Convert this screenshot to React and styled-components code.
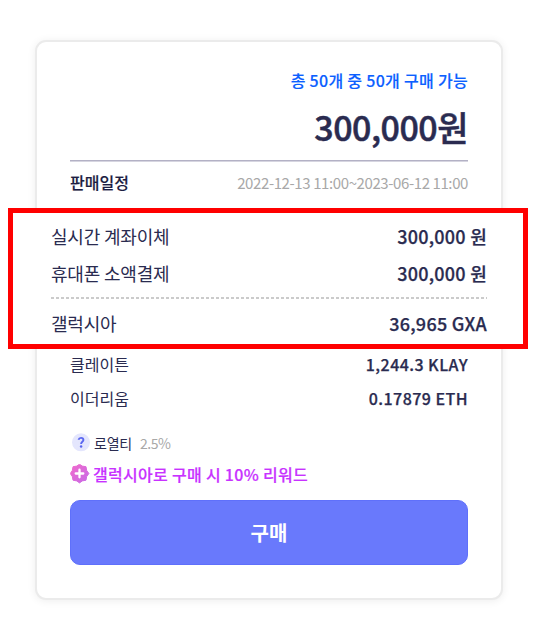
import React from "react";
import styled, { createGlobalStyle } from "styled-components";

const GlobalStyle = createGlobalStyle`
  * { box-sizing: border-box; }
  body {
    margin: 0;
    background: #fff;
    color: #2a2b50;
    font-family: "Noto Sans CJK KR", "Noto Sans", sans-serif;
  }
`;

const Page = styled.main`
  display: flex;
  height: 639px;
  padding: 40px 34px 39px 35px;
  overflow: hidden;
`;

const Card = styled.section`
  display: flex;
  flex-direction: column;
  width: 468px;
  height: 560px;
  padding: 24px 33px 0;
  border: 2px solid #ebebeb;
  border-radius: 11px;
  background: #fff;
  box-shadow: 0 1px 9px rgba(0, 0, 0, 0.07);
`;

const Stock = styled.div`
  height: 28px;
  line-height: 28px;
  font-size: 16px;
  font-weight: 500;
  letter-spacing: 0.3px;
  text-align: right;
  white-space: pre;
  color: #0c5fff;
  -webkit-text-stroke: 0.15px currentColor;
`;

const Price = styled.div`
  height: 67px;
  padding-top: 8px;
  line-height: 50px;
  font-size: 34px;
  font-weight: 500;
  letter-spacing: -0.5px;
  text-align: right;
  -webkit-text-stroke: 0.5px currentColor;
`;

const Rule = styled.div`
  flex: none;
  height: 2px;
  margin-top: -1px;
  border-top: 1px solid #b3b1c5;
  background: #d6d5e0;
`;

const Row = styled.div`
  display: flex;
  flex: none;
  justify-content: space-between;
  height: ${(p) => p.$height}px;
  line-height: ${(p) => p.$height}px;
  font-size: ${(p) => p.$size || 16}px;
  letter-spacing: ${(p) => p.$tracking || 0}px;
  white-space: pre;
`;

const Heading = styled.span`
  font-weight: 500;
  color: #1c1d42;
  -webkit-text-stroke: 0.15px currentColor;
`;

const Period = styled.span`
  font-size: 15px;
  letter-spacing: -0.4px;
  color: #a8a8a8;
`;

const Amount = styled.span`
  font-weight: 500;
  letter-spacing: ${(p) => p.$tracking || 0.25}px;
  -webkit-text-stroke: 0.25px currentColor;
`;

const Highlight = styled.div`
  flex: none;
  height: 141px;
  margin: 5px -62px 0 -62px;
  width: 520px;
  padding: 5px 36px 0 38px;
  border: 5px solid #ff0000;
  background: #fff;
`;

const Divider = styled.div`
  height: 2px;
  margin: 5px 0 6px;
  background: repeating-linear-gradient(90deg, #cbcbcb 0 3px, transparent 3px 5px);
`;

const Royalty = styled.div`
  display: flex;
  align-items: center;
  height: 28px;
  margin-top: 13px;
  font-size: 14px;
  line-height: 28px;
  letter-spacing: -0.2px;
`;

const Badge = styled.svg`
  flex: none;
  width: 20px;
  height: 20px;
  margin: 0 3px 0 ${(p) => p.$inset || 0}px;
`;

const Rate = styled.span`
  margin-left: 8px;
  letter-spacing: -0.5px;
  color: #a8a8a8;
`;

const Reward = styled.div`
  display: flex;
  align-items: center;
  height: 32px;
  margin-top: 1px;
  font-size: 16px;
  line-height: 32px;
  font-weight: 500;
  letter-spacing: 0.3px;
  white-space: pre;
  color: #c832ff;
  -webkit-text-stroke: 0.2px currentColor;
`;

const BuyButton = styled.button`
  flex: none;
  width: 398px;
  height: 65px;
  margin: 10px 0 0;
  padding: 0;
  border: 1px solid #5f70fb;
  border-radius: 10px;
  background: #6979fc;
  color: #fff;
  font: 700 20px/63px "Noto Sans CJK KR", sans-serif;
`;

function QuestionIcon() {
  return (
    <Badge $inset={1} viewBox="0 0 20 20" fill="none">
      <circle cx="10" cy="9.3" r="9" fill="#e4e6fd" />
      <path d="M7.500 6.800C7.900 5.500 8.800 4.900 10 4.900c1.400 0 2.400.8 2.400 2.100 0 1.800-2.300 1.900-2.300 4" stroke="#5a66f0" strokeWidth="1.900" />
      <circle cx="10.100" cy="13.500" r="1.250" fill="#5a66f0" />
    </Badge>
  );
}

function RewardIcon() {
  return (
    <Badge viewBox="0 0 20 20">
      <defs>
        <linearGradient id="reward" x1="0" y1="0" x2="1" y2="1">
          <stop offset="0" stopColor="#f26acb" />
          <stop offset="1" stopColor="#c66ae8" />
        </linearGradient>
      </defs>
      <path
        d="M9.500.200L12.300 2.100L16 2.700L16.700 6.500L18.900 9.500L16.700 12.500L16 16.200L12.300 16.900L9.500 18.900L6.700 16.900L3 16.200L2.300 12.500L.300 9.500L2.300 6.500L3 2.700L6.700 2.100Z"
        fill="url(#reward)" stroke="url(#reward)" strokeWidth="1" strokeLinejoin="round"
      />
      <path d="M9.500 5.700v7.600M5.700 9.500h7.600" stroke="#fff" strokeWidth="2.300" strokeLinecap="round" />
    </Badge>
  );
}

export default function App() {
  return (
    <>
      <GlobalStyle />
      <Page>
        <Card>
          <Stock>총 50개 중 50개 구매 가능</Stock>
          <Price>300,000원</Price>
          <Rule />
          <Row $height={41}>
            <Heading>판매일정</Heading>
            <Period>2022-12-13 11:00~2023-06-12 11:00</Period>
          </Row>
          <Highlight>
            <Row $height={37} $size={18} $tracking={-0.2}><span>실시간 계좌이체</span><Amount>300,000 원</Amount></Row>
            <Row $height={37} $size={18} $tracking={-0.2}><span>휴대폰 소액결제</span><Amount>300,000 원</Amount></Row>
            <Divider />
            <Row $height={36} $size={18} $tracking={-0.2}><span>갤럭시아</span><Amount>36,965 GXA</Amount></Row>
          </Highlight>
          <Row $height={31}><span>클레이튼</span><Amount $tracking={0.45}>1,244.3 KLAY</Amount></Row>
          <Row $height={36}><span>이더리움</span><Amount $tracking={0.45}>0.17879 ETH</Amount></Row>
          <Royalty><QuestionIcon /><span>로열티</span><Rate>2.5%</Rate></Royalty>
          <Reward><RewardIcon /><span>갤럭시아로 구매 시 10% 리워드</span></Reward>
          <BuyButton type="button">구매</BuyButton>
        </Card>
      </Page>
    </>
  );
}
